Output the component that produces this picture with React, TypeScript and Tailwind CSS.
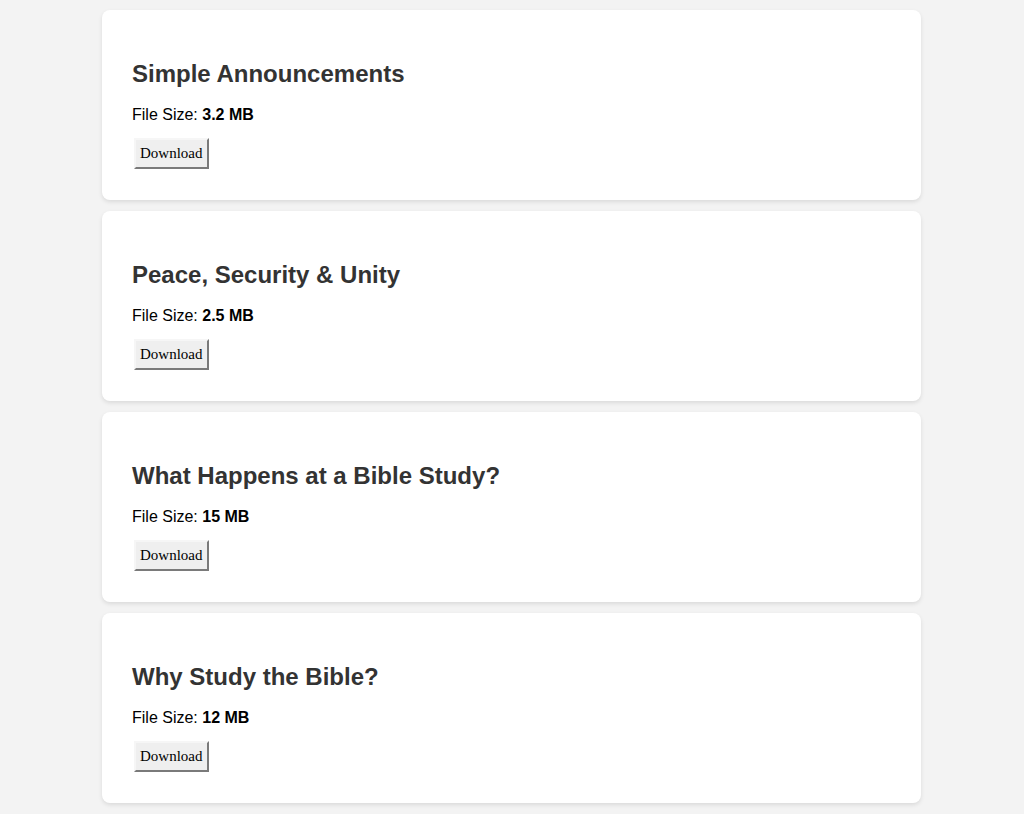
const files = [
  { title: "Simple Announcements", size: "3.2 MB" },
  { title: "Peace, Security & Unity", size: "2.5 MB" },
  { title: "What Happens at a Bible Study?", size: "15 MB" },
  { title: "Why Study the Bible?", size: "12 MB" },
];

const FileCard = ({ title, size }: { title: string; size: string }) => {
  return (
    <div className="bg-white rounded-lg shadow-[0_2px_4px_rgba(0,0,0,0.1)] px-[30px] pt-[50px] pb-[32px] h-[190px]">
      <h2 className="text-[24px] leading-[28px] font-bold text-[#333]">{title}</h2>
      <p className="mt-[18px] text-[16px] leading-[18px] text-black">
        File Size: <strong className="font-bold">{size}</strong>
      </p>
      <button className="mt-[14px] ml-[2px] bg-[#efefef] border-2 border-[#f6f6f6] border-r-[#7a7a7a] border-b-[#7a7a7a] px-[4px] py-[5px] text-[15px] leading-[17px] text-black font-['Liberation_Serif',serif]">
        Download
      </button>
    </div>
  );
};

export default function App() {
  return (
    <div className="min-h-screen bg-[#f3f3f3] font-['Liberation_Sans',Arial,sans-serif] pt-[10px] pb-[10px]">
      <div className="w-[819px] mx-auto ml-[102px] flex flex-col gap-[11px]">
        {files.map((f) => (
          <FileCard key={f.title} title={f.title} size={f.size} />
        ))}
      </div>
    </div>
  );
}
